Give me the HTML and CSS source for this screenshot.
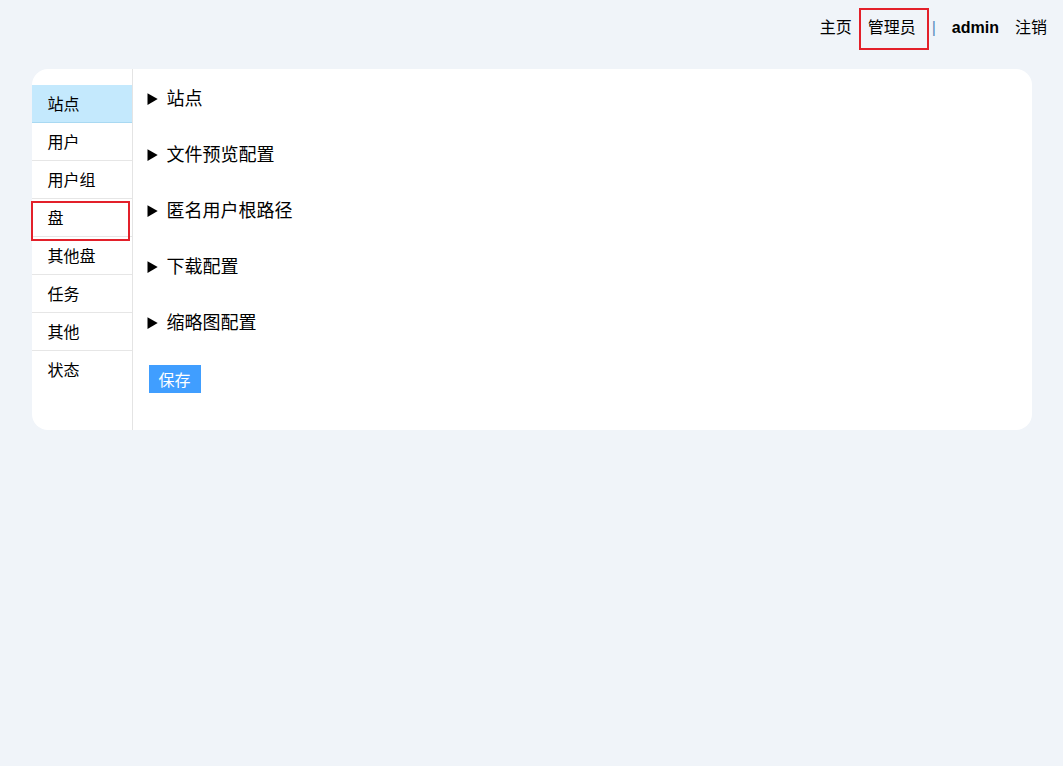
FILE: index.html
```html
<!DOCTYPE html>
<html lang="zh-CN">
<head>
    <meta charset="UTF-8">
    <meta name="viewport" content="width=device-width, initial-scale=1.0">
    <title>管理员</title>
    <link rel="stylesheet" href="styles.css">
</head>
<body>
    <div class="header">
        <a href="#">主页</a>
        <a href="#" class="marked">管理员</a>
        <span class="sep">|</span>
        <b class="user">admin</b>
        <a href="#">注销</a>
    </div>

    <div class="card">
        <ul class="side">
            <li class="active">站点</li>
            <li>用户</li>
            <li>用户组</li>
            <li class="marked">盘</li>
            <li>其他盘</li>
            <li>任务</li>
            <li>其他</li>
            <li>状态</li>
        </ul>

        <div class="main">
            <details><summary>站点</summary></details>
            <details><summary>文件预览配置</summary></details>
            <details><summary>匿名用户根路径</summary></details>
            <details><summary>下载配置</summary></details>
            <details><summary>缩略图配置</summary></details>
            <button class="btn">保存</button>
        </div>
    </div>
</body>
</html>
```

FILE: styles.css
```css
body {
    margin: 0;
    font-family: "Liberation Sans", "Noto Sans CJK SC", sans-serif;
    font-size: 16px;
    color: #000;
    background-color: #f0f4f9;
}
a {
    color: #000;
    text-decoration: none;
}

.header {
    display: flex;
    justify-content: flex-end;
    gap: 16px;
    padding: 17px 16px 0;
    line-height: 22px;
}
.sep {
    color: #5a8fc0;
}
.user {
    font-weight: bold;
}

/* red annotation boxes */
.marked {
    position: relative;
}
.header .marked::after {
    content: "";
    position: absolute;
    top: -9px;
    bottom: -11px;
    left: -9px;
    right: -13px;
    border: 2px solid #e3202a;
}
.side .marked::after {
    content: "";
    position: absolute;
    top: 2px;
    bottom: -5px;
    left: -1px;
    right: 2px;
    border: 2px solid #e3202a;
}

.card {
    display: flex;
    width: 1000px;
    margin: 30px auto 0;
    background: #fff;
    border-radius: 16px;
}
.side {
    list-style: none;
    margin: 0;
    padding: 16px 0;
    width: 100px;
    border-right: 1px solid #e4e4e4;
}
.side li {
    height: 36px;
    padding-top: 1px;
    line-height: 37px;
    padding-left: 16px;
    border-bottom: 1px solid #e6e6e6;
}
.side li:last-child {
    border-bottom: none;
}
.side li.active {
    background: #c4e9fd;
    border-bottom-color: #a9d9f2;
}

.main {
    flex: 1;
    padding: 16px 15px 37px;
}
details {
    margin-bottom: 29px;
    padding-top: 1px;
    font-size: 18px;
    line-height: 26px;
}
summary {
    cursor: pointer;
}
.btn {
    display: block;
    margin-left: 1px;
    height: 28px;
    padding: 0 10px;
    font-family: inherit;
    font-size: 16px;
    color: #fff;
    background-color: #409eff;
    border: none;
    border-radius: 0;
    cursor: pointer;
}
```
